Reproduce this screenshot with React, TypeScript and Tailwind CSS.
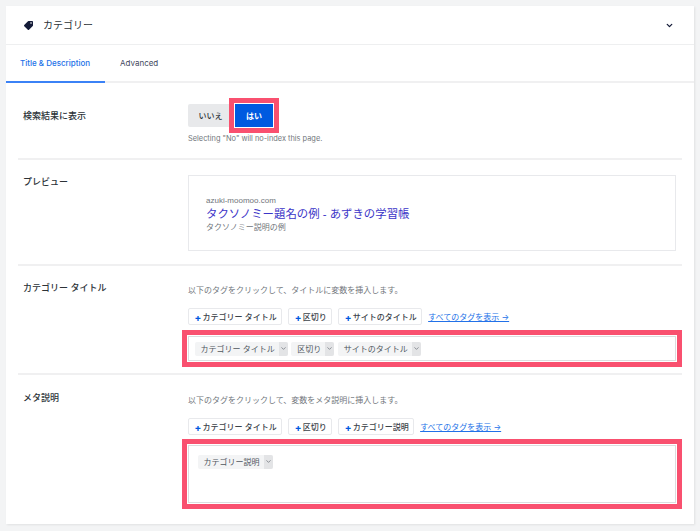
import { FaTag } from "react-icons/fa";
import { ChevronDown } from "lucide-react";

const font = "font-['Inter','Noto_Sans_CJK_JP',sans-serif]";

function InsertTag({ label }: { label: string }) {
  return (
    <button className="h-[17px] pl-[5.5px] pr-[4.5px] flex items-center gap-[2px] bg-white border border-[#e8e9ec] rounded-[2px] text-[8px] font-medium text-[#3c434a] whitespace-nowrap">
      <span className="w-[6px] text-[#005ae0] font-bold text-[10px] leading-none">+</span>
      {label}
    </button>
  );
}

function Token({ label }: { label: string }) {
  return (
    <span className="h-[14px] flex items-center bg-[#f3f4f5] rounded-[2px] text-[8px] text-[#50575e] whitespace-nowrap">
      <span className="pl-[6px] pr-[4px]">{label}</span>
      <span className="h-full w-[9px] flex items-center justify-center bg-[#e3e4e6] rounded-r-[2px]">
        <ChevronDown size={7} strokeWidth={2} />
      </span>
    </span>
  );
}

function Highlight({ className }: { className: string }) {
  return <div className={`pointer-events-none absolute border-[5px] border-[#f9506f] ${className}`} />;
}

function Row({ label, className, children }: { label: string; className: string; children: React.ReactNode }) {
  return (
    <div className={`flex border-b-2 border-[#f0f0f1] ${className}`}>
      <div className="w-[170px] shrink-0 pl-[5px] text-[9px] font-medium leading-[14px] text-[#2c3338]">{label}</div>
      <div className="flex-1 min-w-0">{children}</div>
    </div>
  );
}

function Hint({ children }: { children: React.ReactNode }) {
  return <p className="text-[8px] leading-[12px] text-[#72777c]">{children}</p>;
}

export default function App() {
  return (
    <div className={`${font} w-[700px] h-[531px] bg-[#f3f4f5] p-[6px] overflow-hidden`}>
      <div className="h-[518px] bg-white shadow-[1px_1px_2px_rgba(0,0,0,0.08)]">
        <div className="h-[39px] pl-[18px] pr-[17px] flex items-center justify-between border-b border-[#eeeff0]">
          <div className="flex items-center gap-[10px] text-[10px] text-[#2c3338]">
            <FaTag size={9} className="text-[#141b38] -scale-x-100" />
            カテゴリー
          </div>
          <ChevronDown size={9} strokeWidth={3.5} className="text-[#141b38] mr-[3px]" />
        </div>

        <div className="h-[38px] flex items-center border-b-2 border-[#f0f0f1] text-[8px]">
          <div className="w-[99px] h-[38px] -mb-[2px] pl-[14px] flex items-center border-b-2 border-[#3b82f6] text-[#2271e8] font-medium">
            Title &amp; Description
          </div>
          <div className="pl-[15px] text-[#434960]">Advanced</div>
        </div>

        <div className="px-[12px]">
          <Row label="検索結果に表示" className="h-[77px] pt-[26px]">
            <div className="-mt-[5px] flex items-center">
              <button className="h-[23px] w-[45px] bg-[#e8e9eb] rounded-l-[2px] text-[8px] font-medium text-[#2c3338]">いいえ</button>
              <div className="relative ml-[2px]">
                <button className="block h-[23px] w-[38px] bg-[#005ae0] text-[8px] font-bold text-white">はい</button>
                <Highlight className="-inset-[6px]" />
              </div>
            </div>
            <p className="mt-[6px] text-[7.4px] leading-[12px] text-[#72777c]">Selecting "No" will no-index this page.</p>
          </Row>

          <Row label="プレビュー" className="h-[106px] pt-[15px]">
            <div className="h-[76px] w-[488px] border border-[#e8e9ec] pt-[20px] pl-[17px] font-['Liberation_Sans','Noto_Sans_CJK_JP',sans-serif]">
              <div className="text-[8px] leading-[10px] text-[#70757a]">azuki-moomoo.com</div>
              <div className="text-[11.4px] leading-[17px] text-[#3b35c8]">タクソノミー題名の例 - あずきの学習帳</div>
              <div className="text-[8px] leading-[10px] text-[#70757a]">タクソノミー説明の例</div>
            </div>
          </Row>

          <Row label="カテゴリー タイトル" className="h-[109px] pt-[15px]">
            <div className="pt-[3px]">
              <Hint>以下のタグをクリックして、タイトルに変数を挿入します。</Hint>
            </div>
            <div className="mt-[12px] flex items-center gap-[6px]">
              <InsertTag label="カテゴリー タイトル" />
              <InsertTag label="区切り" />
              <InsertTag label="サイトのタイトル" />
              <a className="text-[8px] text-[#2271e8] underline whitespace-nowrap">すべてのタグを表示 →</a>
            </div>
            <div className="relative mt-[11px] h-[25px] w-[488px]">
              <div className="h-full border-[1.5px] border-[#dcdcde] flex items-center gap-[3.5px] px-[5.5px]">
                <Token label="カテゴリー タイトル" />
                <Token label="区切り" />
                <Token label="サイトのタイトル" />
              </div>
              <Highlight className="-inset-[6px]" />
            </div>
          </Row>

          <div className="flex pt-[16px]">
            <div className="w-[170px] shrink-0 pl-[5px] text-[9px] font-medium leading-[14px] text-[#2c3338]">メタ説明</div>
            <div className="flex-1 min-w-0">
              <div className="pt-[3px]">
                <Hint>以下のタグをクリックして、変数をメタ説明に挿入します。</Hint>
              </div>
              <div className="mt-[12px] flex items-center gap-[6px]">
                <InsertTag label="カテゴリー タイトル" />
                <InsertTag label="区切り" />
                <InsertTag label="カテゴリー説明" />
                <a className="text-[8px] text-[#2271e8] underline whitespace-nowrap">すべてのタグを表示 →</a>
              </div>
              <div className="relative mt-[10px] h-[58px] w-[488px]">
                <div className="h-full border-[1.5px] border-[#dcdcde] pt-[8.5px] pl-[8.5px]">
                  <div className="flex">
                    <Token label="カテゴリー説明" />
                  </div>
                </div>
                <Highlight className="-inset-[6px]" />
              </div>
            </div>
          </div>
        </div>
      </div>
    </div>
  );
}
